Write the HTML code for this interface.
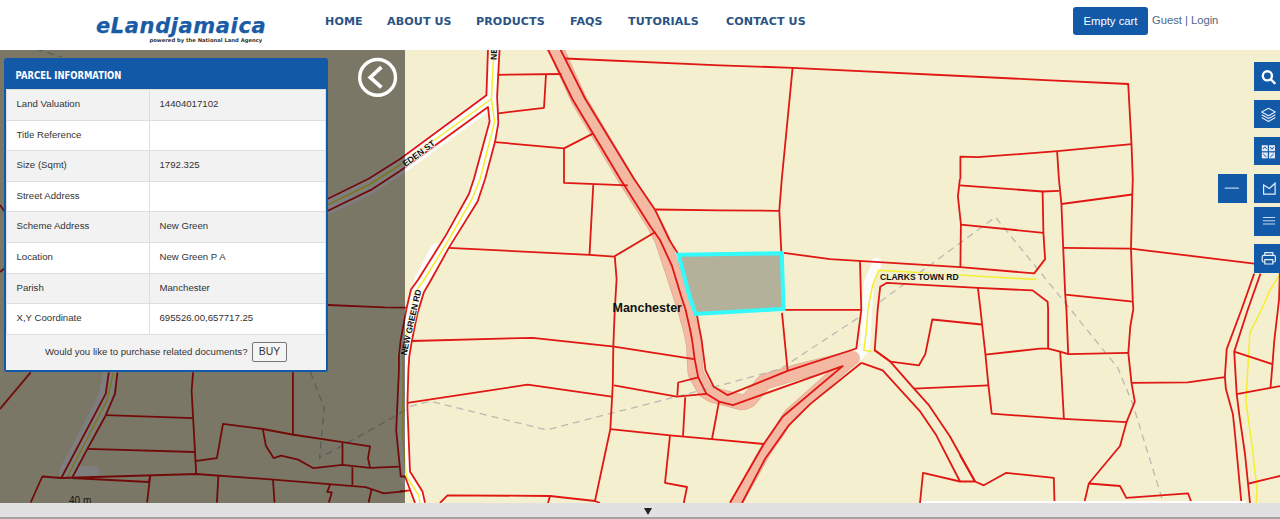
<!DOCTYPE html>
<html><head><meta charset="utf-8"><title>eLandjamaica</title>
<style>
*{box-sizing:border-box}
html,body{margin:0;padding:0;width:1280px;height:519px;overflow:hidden;background:#fff;font-family:"Liberation Sans",Arial,sans-serif}
#hdr{position:absolute;left:0;top:0;width:1280px;height:49.5px;background:#fff}
#logo{position:absolute;left:96px;top:12px;font:italic bold 21px/28px "DejaVu Sans","Liberation Sans",sans-serif;color:#1a5ba6;letter-spacing:0.6px;-webkit-text-stroke:0.25px #1a5ba6;white-space:nowrap}
#logosub{position:absolute;left:149.5px;top:36.5px;font:bold 5.25px/7px "DejaVu Sans","Liberation Sans",sans-serif;color:#333;white-space:nowrap}
.nav{position:absolute;top:13.6px;font:bold 11.1px/16px "DejaVu Sans","Liberation Sans",sans-serif;color:#2a5384;letter-spacing:0.1px;white-space:nowrap}
#cart{position:absolute;left:1073px;top:7px;width:75px;height:27.5px;background:#1259a7;border-radius:3px;color:#fff;font:11.3px/28px "Liberation Sans",sans-serif;text-align:center}
#guest{position:absolute;left:1152px;top:13px;font:11.2px/15px "Liberation Sans",sans-serif;color:#4f6685;white-space:nowrap}
#map{position:absolute;left:0;top:49px;width:1280px;height:454px;background:#f4efcf;overflow:hidden}
#map svg{position:absolute;left:0;top:0}
#shade{position:absolute;left:0;top:49px;width:405px;height:454px;background:rgba(0,0,0,0.5)}
#bot{position:absolute;left:0;top:503px;width:1280px;height:16px;background:#e1e1e1;border-bottom:2px solid #a3a3a3}
#panel{position:absolute;left:4px;top:58px;width:323.5px;background:#1259a7;border-radius:3px;padding:0 2px 2px 2px}
#panel h3{margin:0;height:31px;font:bold 9.7px/35px "DejaVu Sans Condensed","Liberation Sans",sans-serif;color:#fff;padding-left:9.5px;transform:scaleX(0.97);transform-origin:11px 0}
table{border-collapse:collapse;width:319.5px;table-layout:fixed;background:#fff}
td{height:30.6px;border:1.5px solid #dedede;font:9.65px/12px "Liberation Sans",sans-serif;color:#333;padding:0 0 1.4px 9.5px}
tr:nth-child(odd) td{background:#f2f2f2}
td.k{width:143px}
#buy{padding-left:0px;height:35px;background:#f2f2f2;font:9.65px/34px "Liberation Sans",sans-serif;color:#333;text-align:center;white-space:nowrap}
#buy span{display:inline-block;border:1px solid #777;border-radius:2px;background:#f5f5f5;height:20px;line-height:18px;padding:0 5.5px;font-size:10.4px;vertical-align:middle;margin-left:2px;position:relative;top:-0.5px}
.tb{position:absolute;left:1254px;width:26px;height:28.8px;background:#1259a7}
.tb svg{display:block}
#tri{position:absolute;left:643.6px;top:508.4px;width:0;height:0;border-left:4.3px solid transparent;border-right:4.3px solid transparent;border-top:7.6px solid #222}
</style></head><body>
<div id="map">
<svg width="1280" height="454" viewBox="0 49 1280 454">
<!--MAP-->
<polyline points="876.5,262.5 876.0,266.0 868.8,283.0 866.3,325.0 865.0,347.5 858.5,356.0" fill="none" stroke="#fcfcfc" stroke-width="10" stroke-linecap="round" stroke-linejoin="round"/>
<polyline points="493.9,49.0 491.4,99.0 494.6,121.6 480.1,179.0 472.6,197.8 447.6,241.6 424.0,280.0 416.2,290.4 410.5,312.0 405.5,341.0 403.2,356.3 403.2,370.0 402.5,434.0 406.3,476.5 418.8,495.3 420.0,503.0" fill="none" stroke="#fcfcfc" stroke-width="12" stroke-linecap="round" stroke-linejoin="round"/>
<polyline points="491.4,100.0 400.0,166.5 369.5,186.0 327.9,206.0 300.0,219.0" fill="none" stroke="#fcfcfc" stroke-width="16" stroke-linecap="round" stroke-linejoin="round"/>
<polyline points="436.0,248.0 420.0,278.0 414.0,300.0" fill="none" stroke="#fcfcfc" stroke-width="10" stroke-linecap="round" stroke-linejoin="round"/>
<polyline points="110.5,372.0 104.5,399.0 85.0,436.0 66.0,472.0" fill="none" stroke="#fcfcfc" stroke-width="14" stroke-linecap="round" stroke-linejoin="round"/>
<polyline points="70.0,471.5 94.0,471.5" fill="none" stroke="#fcfcfc" stroke-width="11" stroke-linecap="round" stroke-linejoin="round"/>
<polyline points="553.5,45.0 556.5,50.0 578.9,99.9 596.3,129.0 625.8,179.0 654.6,224.6 662.4,240.0 674.0,274.7 686.0,312.0 691.0,330.0 694.0,345.0 695.5,373.0 705.1,390.3 712.0,394.6 742.4,402.5 748.5,400.5 764.1,382.0 800.0,371.2 852.7,358.3" fill="none" stroke="#dca892" stroke-width="15.9" stroke-linejoin="bevel"/>
<polyline points="852.7,358.3 790.1,414.2 773.8,439.0 765.0,451.5 736.3,503.0" fill="none" stroke="#dca892" stroke-width="12.4" stroke-linejoin="bevel"/>
<polyline points="553.5,45.0 556.5,50.0 578.9,99.9 596.3,129.0 625.8,179.0 654.6,224.6 662.4,240.0 674.0,274.7 686.0,312.0 691.0,330.0 694.0,345.0 695.5,373.0 705.1,390.3 712.0,394.6 742.4,402.5 748.5,400.5 764.1,382.0 800.0,371.2 852.7,358.3" fill="none" stroke="#f3b9a3" stroke-width="14.5" stroke-linejoin="bevel" stroke-linecap="round"/>
<polyline points="852.7,358.3 790.1,414.2 773.8,439.0 765.0,451.5 736.3,503.0" fill="none" stroke="#f3b9a3" stroke-width="11" stroke-linejoin="bevel" stroke-linecap="round"/>
<g fill="none" stroke="#b9bab2" stroke-width="1.3" stroke-dasharray="7 5">
<polyline points="880.2,301.7 995.4,217.1 1070.2,309.0 1117.7,367.8 1132.8,404.1 1162.5,500.3"/>
<polyline points="410.0,406.6 430.0,401.1 546.5,429.9 720.0,385.5 780.1,369.1 860.2,316.5"/>
<polyline points="310.4,372.3 324.2,407.5 319.6,458.1 391.6,418.2 405.0,410.0"/>
<polyline points="36.0,49.0 62.0,57.0"/>
</g>
<g fill="none" stroke="#f4ee2c" stroke-width="1.5" stroke-linejoin="round">
<polyline points="493.9,49.0 491.4,99.0 494.6,121.6 480.1,179.0 472.6,197.8 447.6,241.6 424.0,280.0 416.2,290.4 410.5,312.0 405.5,341.0 403.2,356.3 403.2,370.0 402.5,434.0 406.3,476.5 418.8,495.3 420.0,503.0"/>
<polyline points="491.4,99.0 400.0,165.0 369.5,184.5 327.9,204.7 300.0,217.5"/>
<polyline points="866.5,330.0 868.0,309.0 872.6,285.1 878.8,270.2 1036.5,279.5"/>
<polyline points="866.5,330.0 863.8,350.3 872.1,351.5"/>
<polyline points="1280.0,274.1 1270.5,289.2 1261.7,309.0 1249.9,332.8 1245.9,401.6 1252.5,449.0 1257.0,489.0 1256.3,503.0"/>
<polyline points="113.4,372.3 107.3,399.9 66.8,478.0"/>
</g>
<g fill="none" stroke="#e01713" stroke-width="1.8" stroke-linejoin="round">
<polyline points="488.0,49.0 486.4,95.3 400.0,159.0 368.6,178.8 327.9,198.7 300.0,211.0"/>
<polyline points="400.0,171.0 488.0,107.0 489.6,121.6 473.9,179.0 468.9,194.0 445.1,236.6 417.9,280.0 411.0,289.5 406.7,307.7 400.6,340.7 398.9,356.3 398.9,370.0 396.2,430.5 400.8,476.5 405.0,476.5 415.0,502.8"/>
<polyline points="400.0,171.0 370.9,189.9 327.9,210.7 300.0,224.0"/>
<polyline points="499.6,49.0 497.1,96.6 498.4,122.9 495.1,141.6 485.1,179.0 477.6,201.5 448.8,247.9 431.0,280.0 424.0,292.1 417.1,314.7 411.9,340.7 409.3,356.3 408.4,370.0 407.5,401.6 407.5,409.0 410.0,471.5 422.5,491.5 425.0,502.8"/>
<polyline points="497.6,74.8 561.5,74.0"/>
<polyline points="546.0,74.5 544.0,107.8 498.4,113.3"/>
<polyline points="495.0,142.1 564.0,148.4 592.8,133.6"/>
<polyline points="564.0,148.4 564.0,182.8 627.8,185.3"/>
<polyline points="547.7,49.0 572.6,99.5 620.3,179.0 650.4,226.6 660.0,240.0 672.0,266.0 681.5,297.2 685.4,309.0 690.2,330.0 692.1,340.0 694.7,359.1 698.2,377.3 706.5,393.8 719.0,401.6 732.9,405.1 842.7,366.1 782.6,416.7 763.8,444.0 730.0,502.8"/>
<polyline points="560.2,49.0 585.3,99.0 634.1,179.0 655.4,210.3 669.4,240.0 677.2,252.5 688.0,284.2 697.1,316.3 701.6,340.0 705.5,370.4 713.8,386.8 727.7,395.2 787.6,370.8 856.3,348.5 861.3,310.2 860.0,261.0"/>
<polyline points="565.2,58.5 720.0,65.3 792.6,67.8 1040.0,79.8 1128.2,84.0 1131.5,144.1 1132.8,179.0 1132.3,194.5 1131.0,248.6 1132.8,301.7 1133.3,309.0 1130.3,326.5 1128.3,352.8 1131.5,382.9 1134.8,401.6 1126.5,422.2 1120.0,446.0 1088.8,483.5 1084.5,502.0"/>
<polyline points="792.6,67.8 781.8,179.0 779.3,210.3 781.3,251.6"/>
<polyline points="960.4,179.0 960.4,156.7 977.9,157.2 1057.6,151.2 1131.5,144.1"/>
<polyline points="1057.1,151.2 1058.9,179.0 1061.4,204.0 1063.2,247.9 1065.2,294.2 1066.4,309.0 1068.2,354.1"/>
<polyline points="448.8,247.9 589.5,254.9 614.1,256.6 655.4,232.1"/>
<polyline points="593.3,184.5 589.5,254.9"/>
<polyline points="614.8,256.6 616.6,279.2 614.8,309.0 613.3,346.6 612.8,384.1 610.3,429.2 595.0,501.0 600.0,503.0"/>
<polyline points="655.4,209.5 720.0,210.3 779.3,210.8"/>
<polyline points="783.8,252.9 830.2,259.1 960.4,267.1 1034.2,273.4 1045.1,259.1 1043.4,232.8 1042.6,191.5 1058.9,190.8"/>
<polyline points="959.9,179.0 957.9,196.5 960.9,224.1 960.4,267.1"/>
<polyline points="959.9,185.3 1042.6,191.5"/>
<polyline points="960.9,224.6 1043.4,232.8"/>
<polyline points="877.7,309.0 880.2,286.7 886.5,282.9 977.9,287.9 1032.6,290.4 1047.6,301.7 1048.1,309.0 1048.1,348.6"/>
<polyline points="977.9,287.9 980.4,309.0 985.4,354.1 988.4,385.4 991.7,413.7 1063.8,418.9 1126.5,422.2"/>
<polyline points="1061.4,204.0 1132.3,194.5"/>
<polyline points="1063.2,247.9 1131.0,248.6 1254.2,263.6"/>
<polyline points="1065.2,294.7 1132.8,301.7"/>
<polyline points="1254.2,273.6 1241.7,309.0 1226.7,349.1 1224.9,376.6 1225.9,389.1 1232.9,414.2 1235.0,434.0 1241.3,502.0"/>
<polyline points="1260.5,273.6 1248.0,309.0 1234.2,351.6 1236.7,394.1 1239.2,414.2 1245.0,454.0 1250.0,503.0"/>
<polyline points="1280.0,268.0 1279.0,300.0 1274.2,341.5 1272.5,364.1 1270.5,387.9"/>
<polyline points="411.9,341.0 532.7,337.8 614.1,346.6 694.2,359.1"/>
<polyline points="407.5,402.9 527.7,384.6 611.6,396.6"/>
<polyline points="614.1,385.4 676.7,396.6 706.5,393.8"/>
<polyline points="677.3,395.5 678.2,382.5 698.2,377.3"/>
<polyline points="610.3,429.2 670.0,435.3 720.0,439.8 763.8,444.0"/>
<polyline points="685.2,397.3 683.0,436.0"/>
<polyline points="719.0,401.6 712.0,439.0"/>
<polyline points="670.0,435.3 665.0,482.8 687.0,487.0 683.8,503.0"/>
<polyline points="785.0,309.8 861.3,309.8"/>
<polyline points="782.0,312.8 787.6,370.3"/>
<polyline points="861.5,362.8 810.1,404.1 788.8,425.3 765.0,459.0 742.0,503.0"/>
<polyline points="877.7,309.0 874.7,350.3 890.3,361.6 919.0,365.3 925.3,354.1 932.3,319.5 981.6,324.5"/>
<polyline points="985.4,354.6 1040.0,348.6 1048.1,348.6 1060.2,351.6 1068.2,354.1 1128.3,352.8"/>
<polyline points="914.0,388.6 988.4,385.4"/>
<polyline points="861.5,362.8 882.7,370.3 920.3,411.7 936.3,435.3 960.0,481.5"/>
<polyline points="874.7,350.3 890.3,361.6 914.0,388.6 929.1,405.4 950.0,436.5 975.0,481.5"/>
<polyline points="1060.2,351.6 1063.9,418.7"/>
<polyline points="1131.5,382.9 1187.8,382.4 1224.9,377.1"/>
<polyline points="1234.2,351.6 1272.5,364.1"/>
<polyline points="1236.7,394.1 1270.5,387.9 1280.0,386.1"/>
<polyline points="400.0,491.5 410.0,490.3"/>
<polyline points="440.0,503.0 447.5,495.3 550.0,496.0 595.0,501.0"/>
<polyline points="550.0,496.0 548.0,503.0"/>
<polyline points="920.0,503.0 923.0,472.8 960.0,481.5 975.0,481.5 983.8,485.3 1006.3,472.8 1053.8,477.8 1054.5,502.0"/>
<polyline points="960.0,455.3 975.0,481.5"/>
<polyline points="1088.8,483.5 1120.0,486.0 1126.3,497.8 1188.0,493.3 1191.3,502.0"/>
<polyline points="1248.8,483.5 1280.0,476.0"/>
<polyline points="30.7,372.3 0.0,409.0"/>
<polyline points="0.0,205.0 5.0,212.0"/>
<polyline points="0.0,272.0 5.0,268.0"/>
<polyline points="108.8,372.3 105.8,393.7 61.3,478.0"/>
<polyline points="117.4,372.3 115.0,393.7 105.8,415.2 87.4,448.9 72.0,478.0"/>
<polyline points="105.8,415.2 193.1,418.2"/>
<polyline points="87.4,448.9 194.7,452.0"/>
<polyline points="193.1,372.3 191.6,390.7 196.2,473.4"/>
<polyline points="194.7,461.2 216.9,458.1 223.0,423.8 262.8,429.0 292.0,434.5 342.5,442.2 370.1,446.4 368.0,458.1 370.1,467.9"/>
<polyline points="30.7,502.5 42.3,476.5 61.3,478.0 196.2,474.0 273.6,479.6 328.8,484.2 365.5,487.2 383.9,493.4 405.4,491.2"/>
<polyline points="72.0,478.0 148.7,482.0 150.2,475.9"/>
<polyline points="150.2,475.9 147.1,502.5"/>
<polyline points="292.9,372.3 292.9,434.5"/>
<polyline points="262.8,429.0 265.9,445.8 273.6,458.1 281.2,455.6 298.1,459.6 313.4,468.2 342.5,464.8 370.1,467.9 399.3,466.7"/>
<polyline points="342.5,442.2 342.5,464.8"/>
<polyline points="352.4,467.3 352.4,485.0"/>
<polyline points="218.4,475.9 216.9,502.5"/>
<polyline points="273.0,479.6 274.5,502.5"/>
<polyline points="330.3,484.2 327.2,491.8 331.8,492.4 328.8,502.5"/>
<polyline points="371.7,488.8 368.6,502.5"/>
<polyline points="327.9,305.0 385.0,307.4 406.7,307.7"/>
</g>
<path d="M678.6 254.7 L781.8 253.2 L783.5 308.9 L695.7 313.9 Q689 297 686.2 284 Z" fill="#b4b19a" stroke="#33fbfb" stroke-width="4" stroke-linejoin="miter"/>
<g font-family="Liberation Sans, Arial, sans-serif" font-weight="bold" fill="#111">
<text x="612.5" y="311.6" font-size="12.5">Manchester</text>
<text x="880" y="280" font-size="8.55" stroke="#f4efcf" stroke-width="2" paint-order="stroke">CLARKS TOWN RD</text>
<text transform="translate(406.5,355.6) rotate(-77.3)" font-size="8.5" stroke="#fbfbf4" stroke-width="1.6" paint-order="stroke">NEW GREEN RD</text>
<text transform="translate(405.4,167.1) rotate(-36.5)" font-size="8.7" stroke="#fbfbf4" stroke-width="1.6" paint-order="stroke">EDEN ST</text>
<text transform="translate(496.5,60) rotate(-87)" font-size="8.5" stroke="#f4efcf" stroke-width="1.5" paint-order="stroke">NEW GREEN RD</text>
</g>
<text x="69" y="503.5" font-family="Liberation Sans, Arial, sans-serif" font-size="10" fill="#333">40 m</text>
<rect x="921" y="501" width="325" height="2.5" fill="#fff"/>
<!--/MAP-->
</svg>
</div>
<div id="shade"></div>
<div id="hdr">
<div id="logo">eLandjamaica</div>
<div id="logosub">powered by the National Land Agency</div>
<div class="nav" style="left:325px">HOME</div>
<div class="nav" style="left:387px">ABOUT US</div>
<div class="nav" style="left:476px">PRODUCTS</div>
<div class="nav" style="left:570px">FAQS</div>
<div class="nav" style="left:628px">TUTORIALS</div>
<div class="nav" style="left:726px">CONTACT US</div>
<div id="cart">Empty cart</div>
<div id="guest">Guest | Login</div>
</div>
<div id="panel"><h3>PARCEL INFORMATION</h3>
<table>
<tr><td class="k">Land Valuation</td><td>14404017102</td></tr>
<tr><td class="k">Title Reference</td><td></td></tr>
<tr><td class="k">Size (Sqmt)</td><td>1792.325</td></tr>
<tr><td class="k">Street Address</td><td></td></tr>
<tr><td class="k">Scheme Address</td><td>New Green</td></tr>
<tr><td class="k">Location</td><td>New Green P A</td></tr>
<tr><td class="k">Parish</td><td>Manchester</td></tr>
<tr><td class="k">X,Y Coordinate</td><td>695526.00,657717.25</td></tr>
</table>
<div id="buy">Would you like to purchase related documents? <span>BUY</span></div>
</div>
<div id="bot"></div>
<div class="tb" style="top:62px"><svg width="26" height="29" viewBox="0 0 26 29"><circle cx="13.4" cy="13.8" r="4.6" fill="none" stroke="#fff" stroke-width="2.4"/><path d="M17 17.5 L20.6 21.2" stroke="#fff" stroke-width="2.4" stroke-linecap="round"/></svg></div>
<div class="tb" style="top:99.6px"><svg width="26" height="29" viewBox="0 0 26 29"><g fill="none" stroke="#e8eef7" stroke-width="1.1" stroke-linejoin="round"><path d="M14.5 8.2 L21.3 12 L14.5 15.8 L7.7 12 Z"/><path d="M7.7 14.8 L14.5 18.6 L21.3 14.8"/><path d="M7.7 17.6 L14.5 21.4 L21.3 17.6"/></g></svg></div>
<div class="tb" style="top:136.5px"><svg width="26" height="29" viewBox="0 0 26 29"><g fill="#dfe8f4"><rect x="7.8" y="8.2" width="6" height="6"/><rect x="15" y="8.2" width="6" height="6"/><rect x="7.8" y="15.4" width="6" height="6"/><rect x="15" y="15.4" width="6" height="6"/></g><g stroke="#1259a7" stroke-width="1" fill="none"><path d="M9 12 L10.8 9.8 L12.6 12"/><path d="M16.2 10 L18 12.3 L19.8 10"/><path d="M9.2 17 L12.4 20"/><path d="M16.4 20 L19.6 17"/></g></svg></div>
<div class="tb" style="top:173.8px"><svg width="26" height="29" viewBox="0 0 26 29"><path d="M9.6 10.9 L15.4 14.4 L21.1 9.2 L21.1 20.1 L9.6 20.1 Z" fill="none" stroke="#e8eef7" stroke-width="1.2"/></svg></div>
<div class="tb" style="left:1218px;width:29px;top:173.8px"><svg width="29" height="29" viewBox="0 0 29 29"><path d="M6.7 14.1 H20.8" stroke="#c9d9ee" stroke-width="1.2"/></svg></div>
<div class="tb" style="top:207.2px"><svg width="26" height="29" viewBox="0 0 26 29"><path d="M8.9 10.5 H21.1 M8.9 13.8 H21.1 M8.9 17 H21.1" stroke="#c9d9ee" stroke-width="1"/></svg></div>
<div class="tb" style="top:244px"><svg width="26" height="29" viewBox="0 0 26 29"><g fill="none" stroke="#e8eef7" stroke-width="1.2" stroke-linejoin="round"><path d="M10.8 11.4 V8.6 H18.8 V11.4"/><rect x="8.2" y="11.4" width="13.2" height="6.6" rx="1.5"/><rect x="10.8" y="15.6" width="8" height="4.4" fill="#1259a7"/></g></svg></div>
<svg style="position:absolute;left:355px;top:55px" width="45" height="45" viewBox="355 55 45 45"><circle cx="377.6" cy="77.4" r="17.9" fill="none" stroke="#fff" stroke-width="3.4"/><path d="M381.4 67.2 L370.3 77.4 L381.4 87.4" fill="none" stroke="#fff" stroke-width="3.8"/></svg>
<div id="tri"></div>

</body></html>
